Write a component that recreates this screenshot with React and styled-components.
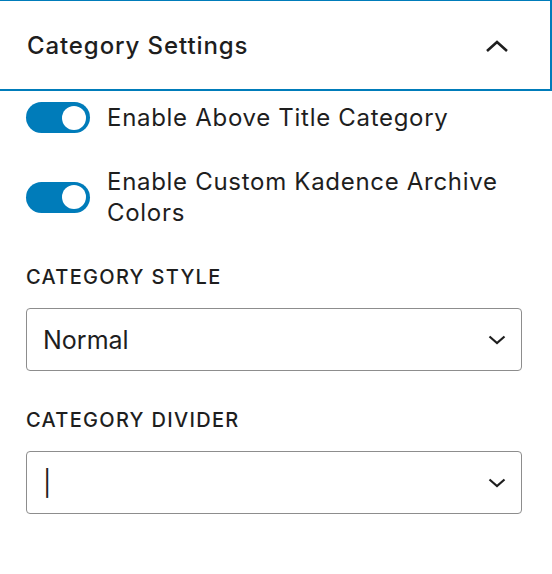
import React from 'react';
import styled, { createGlobalStyle } from 'styled-components';

const Colors = {
  TEXT: '#1e1e1e',
  ACCENT: '#007cba',
  BORDER: '#8d8d8d',
  WHITE: '#ffffff',
};

const GlobalStyle = createGlobalStyle`
  html, body {
    margin: 0;
    padding: 0;
    background: ${Colors.WHITE};
  }
  body {
    font-family: Inter, "Noto Sans", "Liberation Sans", sans-serif;
    color: ${Colors.TEXT};
  }
`;

const Panel = styled.section`
  width: 552px;
  height: 574px;
  overflow: hidden;
  background: ${Colors.WHITE};
`;

const PanelHeader = styled.button`
  display: flex;
  align-items: center;
  justify-content: space-between;
  box-sizing: border-box;
  width: 100%;
  height: 91px;
  margin: 0;
  padding: 0 43px 0 27px;
  border: none;
  background: ${Colors.WHITE};
  box-shadow: inset 0 1px 0 ${Colors.ACCENT}, inset -2px -2px 0 ${Colors.ACCENT};
  font-family: inherit;
  font-size: 24px;
  font-weight: 500;
  letter-spacing: 0.9px;
  color: ${Colors.TEXT};
  cursor: pointer;
  text-align: left;
`;

const PanelBody = styled.div`
  display: flex;
  flex-direction: column;
  padding: 11px 30px 0 26px;
`;

const ToggleRow = styled.label`
  display: flex;
  align-items: center;
  gap: 17px;
  margin-bottom: ${(p) => p.$spacing}px;
`;

const Track = styled.span`
  position: relative;
  flex: none;
  width: 64px;
  height: 31px;
  border-radius: 16px;
  background: ${(p) => (p.$checked ? Colors.ACCENT : '#949494')};
`;

const Thumb = styled.span`
  position: absolute;
  top: 3.5px;
  right: ${(p) => (p.$checked ? '4px' : 'auto')};
  left: ${(p) => (p.$checked ? 'auto' : '4px')};
  width: 24px;
  height: 24px;
  border-radius: 50%;
  background: ${Colors.WHITE};
`;

const ToggleLabel = styled.span`
  font-size: 24px;
  line-height: 31px;
  letter-spacing: 0.7px;
`;

const FieldLabel = styled.div`
  font-size: 20px;
  font-weight: 500;
  line-height: 24px;
  letter-spacing: 1.3px;
  text-transform: uppercase;
  margin-bottom: 19px;
`;

const SelectBox = styled.div`
  display: flex;
  align-items: center;
  justify-content: space-between;
  box-sizing: border-box;
  height: 63px;
  padding: 0 15px 0 16px;
  border: 1.5px solid ${Colors.BORDER};
  border-radius: 4px;
  font-size: 25px;
  margin-bottom: ${(p) => p.$spacing}px;
`;

const ChevronUp = () => (
  <svg width="24" height="14" viewBox="0 0 24 14" fill="none">
    <path d="M2 12 L12 3 L22 12" stroke={Colors.TEXT} strokeWidth="2.6" />
  </svg>
);

const ChevronDown = () => (
  <svg width="18" height="10" viewBox="0 0 18 10" fill="none">
    <path d="M1.5 1.5 L9 8 L16.5 1.5" stroke={Colors.TEXT} strokeWidth="2.2" />
  </svg>
);

function Toggle({ checked, label, spacing }) {
  return (
    <ToggleRow $spacing={spacing}>
      <Track $checked={checked}>
        <Thumb $checked={checked} />
      </Track>
      <ToggleLabel>{label}</ToggleLabel>
    </ToggleRow>
  );
}

function SelectField({ label, value, spacing }) {
  return (
    <>
      <FieldLabel>{label}</FieldLabel>
      <SelectBox $spacing={spacing}>
        <span>{value}</span>
        <ChevronDown />
      </SelectBox>
    </>
  );
}

export default function App() {
  return (
    <>
      <GlobalStyle />
      <Panel>
        <PanelHeader>
          <span>Category Settings</span>
          <ChevronUp />
        </PanelHeader>
        <PanelBody>
          <Toggle checked label="Enable Above Title Category" spacing={33} />
          <Toggle
            checked
            label="Enable Custom Kadence Archive Colors"
            spacing={37}
          />
          <SelectField label="Category Style" value="Normal" spacing={37} />
          <SelectField label="Category Divider" value="|" spacing={0} />
        </PanelBody>
      </Panel>
    </>
  );
}
